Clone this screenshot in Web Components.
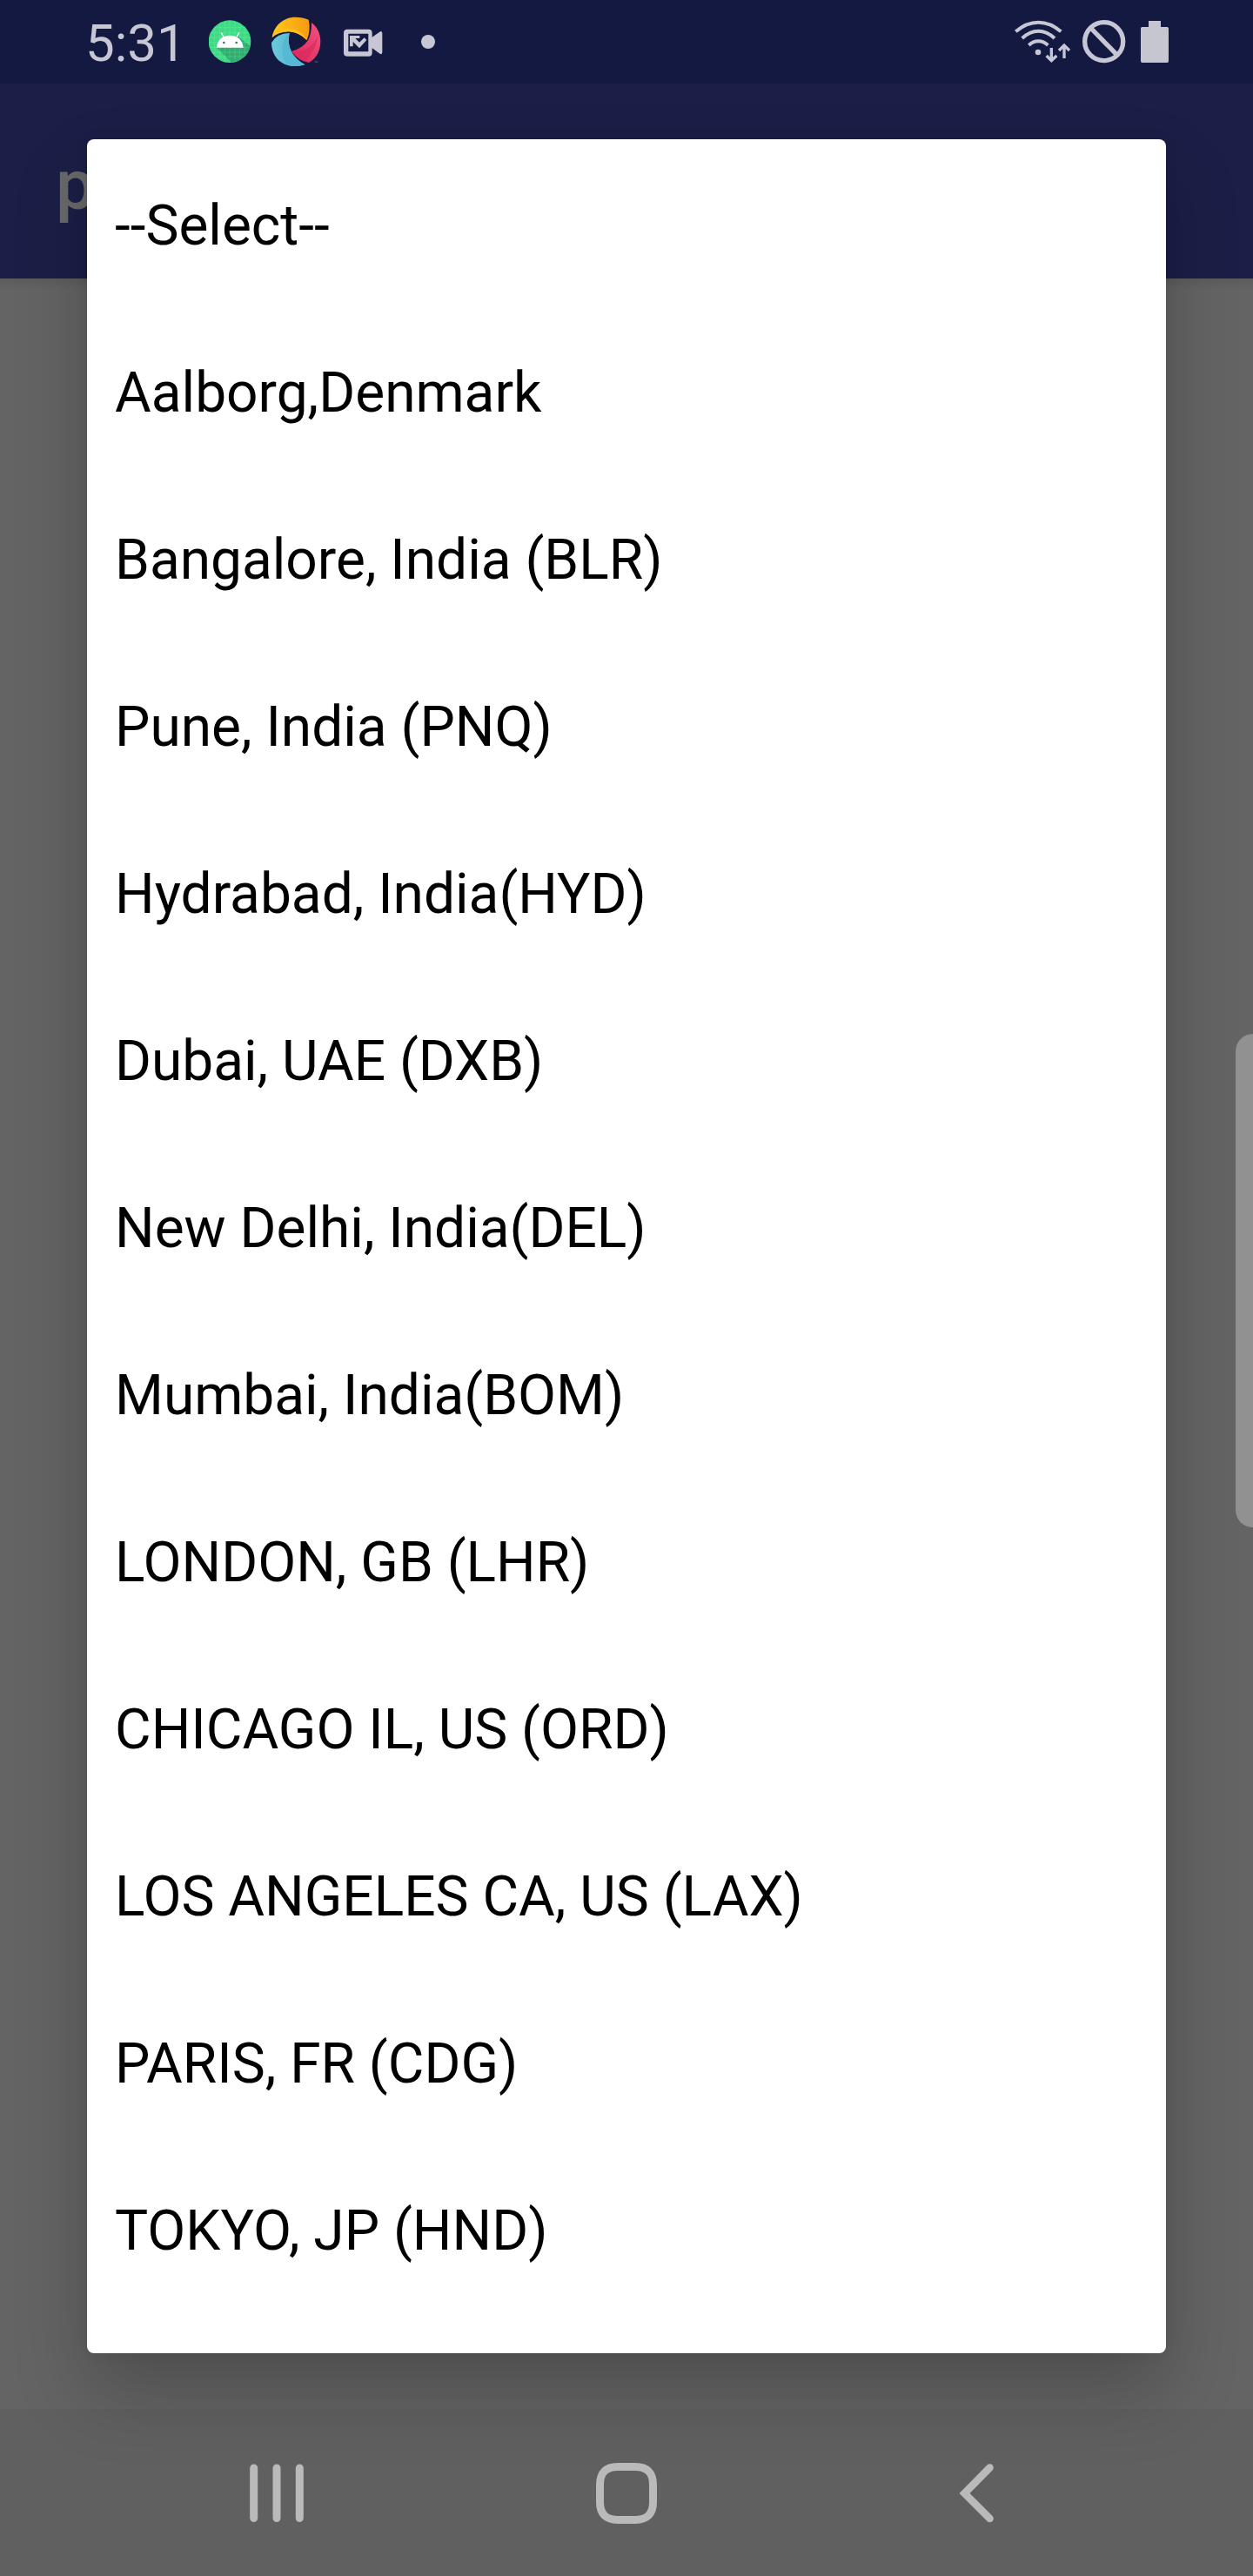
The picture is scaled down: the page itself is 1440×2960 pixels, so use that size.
<!DOCTYPE html>
<html lang="en">
<head>
<meta charset="utf-8">
<title>Select a city</title>
<style>
  html, body { margin: 0; padding: 0; }
  body { width: 1440px; height: 2960px; overflow: hidden; font-family: Roboto, "Liberation Sans", sans-serif; }
</style>
</head>
<body>
<phone-screen>
  <status-bar slot="status" time="5:31"></status-bar>
  <app-bar slot="header">p</app-bar>
  <nav-bar slot="nav"></nav-bar>
  <edge-handle slot="overlay"></edge-handle>
  <option-dialog slot="overlay">
    <option-row>--Select--</option-row>
    <option-row>Aalborg,Denmark</option-row>
    <option-row>Bangalore, India (BLR)</option-row>
    <option-row>Pune, India (PNQ)</option-row>
    <option-row>Hydrabad, India(HYD)</option-row>
    <option-row>Dubai, UAE (DXB)</option-row>
    <option-row>New Delhi, India(DEL)</option-row>
    <option-row>Mumbai, India(BOM)</option-row>
    <option-row>LONDON, GB (LHR)</option-row>
    <option-row>CHICAGO IL, US (ORD)</option-row>
    <option-row>LOS ANGELES CA, US (LAX)</option-row>
    <option-row>PARIS, FR (CDG)</option-row>
    <option-row>TOKYO, JP (HND)</option-row>
  </option-dialog>
</phone-screen>
<script>
const define = (name, html) => customElements.define(name, class extends HTMLElement {
  constructor() {
    super();
    this.attachShadow({ mode: 'open' }).innerHTML = html;
  }
  connectedCallback() {
    const t = this.shadowRoot.querySelector('[data-time]');
    if (t) t.textContent = this.getAttribute('time');
  }
});

define('phone-screen', `
<style>
  :host { display: flex; flex-direction: column; position: relative; width: 1440px; height: 2960px; background: #646464; overflow: hidden; }
  main { flex: 1; background: linear-gradient(#5c5c5c, #646464 14px); }
</style>
<slot name="status"></slot><slot name="header"></slot><main></main><slot name="nav"></slot><slot name="overlay"></slot>`);

define('status-bar', `
<style>
  :host { display: flex; height: 96px; background: #131941; color: #c6c6d4; position: relative; z-index: 3; }
  time { box-sizing: border-box; padding-left: 98px; font-size: 60px; line-height: 99px; white-space: nowrap; flex: 0 0 240px; }
  svg { display: block; height: 100px; flex: none; }
  .space { flex: 1; }
  .a { width: 50px; } .s { width: 60px; margin-left: 20px; } .v { width: 50px; margin-left: 22px; }
  .d { width: 20px; margin-left: 40px; } .w { width: 70px; } .n { width: 54px; margin-left: 8px; }
  .b { width: 34px; margin-left: 16px; margin-right: 96px; }
</style>
<time data-time></time>
<svg class="a" viewBox="480 0 150 300">
  <circle cx="552" cy="143" r="73" fill="#3ddc84"/>
  <path d="M507 164L558 215Q612 207 623 160L578 122Z" fill="#2fae70"/>
  <path d="M500 95V192M518 80V205M535 73V214M552 70V216M570 73V214M587 80V205M604 93V194M500 95H604M486 112H618M482 129H622M480 146H624M482 163H622M489 180H615M502 195H602" stroke="#a9f0c8" stroke-width="1.2" opacity=".55"/>
  <path d="M507 164C509 138 528 122 553 122S597 138 599 164Z" fill="#fff"/>
  <path d="M523 113L531 127M584 113L576 127" stroke="#fff" stroke-width="4"/>
  <circle cx="532" cy="147" r="4" fill="#3b7a5a"/><circle cx="575" cy="147" r="4" fill="#3b7a5a"/>
</svg>
<svg class="s" viewBox="60 0 180 300">
  <defs>
    <linearGradient id="y"><stop offset="0" stop-color="#ffc81c"/><stop offset="1" stop-color="#f79a10"/></linearGradient>
    <linearGradient id="r" x1="1" y1="0" x2="0" y2="1"><stop offset="0" stop-color="#f0517e"/><stop offset="1" stop-color="#dc285c"/></linearGradient>
    <linearGradient id="c"><stop offset="0" stop-color="#6cc8dc"/><stop offset="1" stop-color="#4fb4d0"/></linearGradient>
  </defs>
  <path d="M68 129C76 84 111 59 148 59Q174 59 194 68Q202 104 188 139Q163 112 128 109Q92 108 68 129Z" fill="url(#y)"/>
  <path d="M68 129Q84 101 124 98Q166 99 188 139Q163 112 128 109Q92 108 68 129Z" fill="#ffc022"/>
  <path d="M204 78C232 99 241 135 231 171Q221 202 195 216Q158 210 135 177Q173 166 191 140Q205 115 204 78Z" fill="url(#r)"/>
  <path d="M138 180Q172 181 199 160Q218 145 226 124Q219 174 182 210Q154 199 138 180Z" fill="#d9275b" opacity=".6"/>
  <path d="M66 147Q84 115 128 114Q120 151 136 181Q150 206 181 223Q159 230 133 227C91 221 66 188 66 147Z" fill="url(#c)"/>
  <path d="M128 114Q107 133 103 163Q101 190 116 221L133 227Q159 230 181 223Q150 206 136 181Q120 151 128 114Z" fill="#56b9d3"/>
  <path d="M215 211H219M217 211V216M221 216V211L223 214L225 211V216" fill="none" stroke="#8a8da8" stroke-width="1"/>
</svg>
<svg class="v" viewBox="306 0 150 300" fill="#c6c6d4">
  <path fill-rule="evenodd" d="M327 101H401Q413 101 413 113V128L442 108Q448 108 448 114V181Q448 187 442 187L413 166V182Q413 194 401 194H327Q315 194 315 182V113Q315 101 327 101ZM331 116V178H400V116Z"/>
  <path d="M336 123H370V132H355L369 146L386 130L394 138L369 166L347 144V160H336Z"/>
</svg>
<svg class="d" viewBox="576 0 60 300"><circle cx="606" cy="144" r="24" fill="#c6c6d4"/></svg>
<span class="space"></span>
<svg class="w" viewBox="66 0 210 300" fill="none" stroke="#c6c6d4">
  <path d="M82 109Q118 77 160 77T238 109M104 132Q130 107 160 107T216 132M127 156Q142 142 160 142T193 156" stroke-width="12"/>
  <circle cx="159" cy="180" r="10" fill="#c6c6d4" stroke="none"/>
  <path d="M205 165V208M188 192L205 209L223 192M249 201V158M231 174L249 156L267 174" stroke-width="10"/>
</svg>
<svg class="n" viewBox="300 0 162 300" fill="none" stroke="#c6c6d4" stroke-width="16">
  <circle cx="386" cy="143" r="66"/><path d="M340 96L432 190"/>
</svg>
<svg class="b" viewBox="510 0 102 300"><path d="M540 72H582V93H604Q609 93 609 98V211Q609 216 604 216H518Q513 216 513 211V98Q513 93 518 93H540Z" fill="#c6c6d0"/></svg>
`);

define('app-bar', `
<style>
  :host { display: flex; align-items: center; height: 224px; box-sizing: border-box; padding: 9px 0 0 64px; background: #1b1f47; color: #696969; font-size: 80px; font-weight: 500; }
</style><slot></slot>`);

define('nav-bar', `
<style>
  :host { display: flex; justify-content: center; align-items: center; height: 192px; background: #606060; }
  div { flex: 0 0 402px; display: flex; justify-content: center; position: relative; z-index: 3; }
  svg { width: 80px; height: 80px; fill: none; stroke: #bababa; stroke-width: 9; stroke-linecap: round; }
</style>
<div><svg viewBox="278 2824 80 80"><path d="M291.7 2836V2893.5M318 2836V2893.5M344.3 2836V2893.5"/></svg></div>
<div><svg viewBox="680 2824 80 80"><path d="M710 2834.5H730Q750.5 2834.5 750.5 2855V2875Q750.5 2895.5 730 2895.5H710Q689.5 2895.5 689.5 2875V2855Q689.5 2834.5 710 2834.5Z"/></svg></div>
<div><svg viewBox="1082 2824 80 80"><path stroke-width="8.6" d="M1137.5 2835.5L1108.5 2865L1137.5 2894"/></svg></div>`);

define('edge-handle', `
<style>
  :host { display: block; position: absolute; right: 0; top: 1188px; width: 20px; height: 567px; border-radius: 20px 0 0 20px; background: #919191; z-index: 3; }
</style>`);

define('option-dialog', `
<style>
  :host { display: flex; flex-direction: column; position: absolute; left: 100px; top: 160px; width: 1240px; height: 2544px; border-radius: 8px; background: #fff; z-index: 2; overflow: hidden;
    box-shadow: 0 44px 84px rgba(0,0,0,.22), 0 0 16px rgba(0,0,0,.07); }
</style><slot></slot>`);

define('option-row', `
<style>
  :host { display: flex; align-items: center; flex: 0 0 192px; height: 192px; box-sizing: border-box; padding: 6px 32px 0; font-size: 64px; color: #000; white-space: nowrap; }
</style><slot></slot>`);
</script>
</body>
</html>
